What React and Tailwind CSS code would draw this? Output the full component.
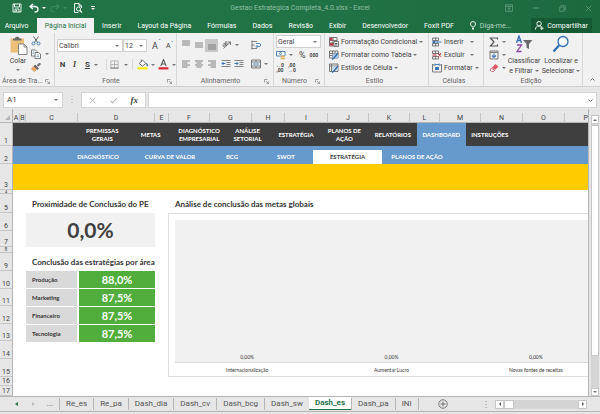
import clsx from 'clsx'

const ribbonTabs = ['Inserir', 'Layout da Página', 'Fórmulas', 'Dados', 'Revisão', 'Exibir', 'Desenvolvedor', 'Foxit PDF']

const columns = ['A', 'B', 'C', 'D', 'E', 'F', 'G', 'H', 'I', 'J', 'K', 'L', 'M', 'N', 'O', 'P']

const rows = [
  { n: 1, h: 'h-[23px]' },
  { n: 2, h: 'h-[18px]' },
  { n: 3, h: 'h-[26px]' },
  { n: 4, h: 'h-[4px] text-[4px] leading-[3px]' },
  { n: 5, h: 'h-[19px]' },
  { n: 6, h: 'h-[18px]' },
  { n: 7, h: 'h-[16px]' },
  { n: 8, h: 'h-[6px] text-[5px] leading-[5px]' },
  { n: 9, h: 'h-[18px]' },
  { n: 10, h: 'h-[18px]' },
  { n: 11, h: 'h-[17px]' },
  { n: 12, h: 'h-[18px]' },
  { n: 13, h: 'h-[17px]' },
  { n: 14, h: 'h-[18px]' },
  { n: 15, h: 'h-[18px]' },
  { n: 16, h: 'h-[9px]' },
  { n: 17, h: 'h-[10px]' },
]

const mainNav = [
  ['PREMISSAS', 'GERAIS'],
  ['METAS'],
  ['DIAGNÓSTICO', 'EMPRESARIAL'],
  ['ANÁLISE', 'SETORIAL'],
  ['ESTRATÉGIA'],
  ['PLANOS DE', 'AÇÃO'],
  ['RELATÓRIOS'],
  ['DASHBOARD'],
  ['INSTRUÇÕES'],
]

const subNav = ['DIAGNÓSTICO', 'CURVA DE VALOR', 'BCG', 'SWOT', 'ESTRATÉGIA', 'PLANOS DE AÇÃO']

const areas = [
  { name: 'Produção', value: '88,0%' },
  { name: 'Marketing', value: '87,5%' },
  { name: 'Financeiro', value: '87,5%' },
  { name: 'Tecnologia', value: '87,5%' },
]

const goals = [
  { name: 'Internacionalização', value: '0,00%' },
  { name: 'Aumentar Lucro', value: '0,00%' },
  { name: 'Novas fontes de receitas', value: '0,00%' },
]

const sheets = ['Re_es', 'Re_pa', 'Dash_dia', 'Dash_cv', 'Dash_bcg', 'Dash_sw', 'Dash_es', 'Dash_pa', 'INI']

function Svg({ size = 'size-[10px]', box = '0 0 20 20', label, children }) {
  return (
    <svg
      viewBox={box}
      className={clsx(size, 'shrink-0')}
      fill="none"
      stroke="#6b6b6b"
      strokeWidth="1.8"
      role={label ? 'img' : undefined}
      aria-label={label}
      aria-hidden={label ? undefined : true}
    >
      {children}
    </svg>
  )
}

function Caret({ className = 'border-t-[#777]' }) {
  return <span className={clsx('w-0 h-0 shrink-0 border-x-2 border-t-2 border-x-transparent', className)} />
}

function IconButton({ label, className, children }) {
  return (
    <button type="button" aria-label={label} className={clsx('flex items-center justify-center shrink-0', className)}>
      {children}
    </button>
  )
}

function Lines({ widths, from = 3 }) {
  return widths.map(([x1, x2], i) => <path key={i} d={`M${x1} ${from + i * 4}H${x2}`} stroke="#777" />)
}

function Group({ label, launcher, width, children }) {
  return (
    <section aria-label={label} className={clsx('flex flex-col shrink-0 border-r border-[#d8d8d8]', width)}>
      <div className="h-[43px]">{children}</div>
      <div className="flex items-center h-[10px] pr-1 text-[#666]">
        <span className="flex-1 text-center whitespace-nowrap">{label}</span>
        {launcher && (
          <IconButton label={`Opções de ${label}`}>
            <Svg size="size-[5px]" box="0 0 10 10">
              <path d="M1 7V1h6M4 4l5 5M9 5v4H5" strokeWidth="1.2" />
            </Svg>
          </IconButton>
        )}
      </div>
    </section>
  )
}

function Picker({ label, value, width }) {
  return (
    <div className={clsx('flex items-center h-[13px] bg-white border border-[#d0d0d0]', width)}>
      <select aria-label={label} className="flex-1 min-w-0 appearance-none pl-px text-[#444] bg-transparent">
        <option>{value}</option>
      </select>
      <Caret className="border-t-[#777] mr-[3px]" />
    </div>
  )
}

function MenuRow({ icon, text, wide }) {
  return (
    <button type="button" className="flex items-center h-[13px] gap-[2px] whitespace-nowrap">
      {icon}
      <span className={clsx(wide && 'w-[24px] text-left')}>{text}</span>
      <Caret />
    </button>
  )
}

function TitleBar() {
  return (
    <div className="grid grid-cols-[1fr_auto_1fr] items-center h-[18px] pb-[2px]">
      <div className="flex items-center pl-3">
        <IconButton label="Salvar" className="w-[10px]">
          <Svg>
            <path d="M2 2h16v16H2z" stroke="#fff" />
            <path d="M5 2v6h10V2M6 18v-6h8v6M9 14v3" stroke="#fff" />
          </Svg>
        </IconButton>
        <IconButton label="Desfazer" className="ml-[7px] gap-[3px]">
          <Svg>
            <path d="M8 2L2 7l6 5M2 7h9c5 0 7 3 7 6s-3 5-7 5" stroke="#fff" strokeWidth="2.6" />
          </Svg>
          <Caret className="border-t-white" />
        </IconButton>
        <IconButton label="Refazer" className="ml-1 gap-[3px]">
          <Svg>
            <path d="M12 2l6 5-6 5M18 7H9c-5 0-7 3-7 6s3 5 7 5" stroke="#3f8a5d" strokeWidth="2.2" />
          </Svg>
          <Caret className="border-t-[#3f8a5d]" />
        </IconButton>
        <IconButton label="Visualizar impressão" className="ml-[6px]">
          <Svg>
            <path d="M3 19V1h9l5 5v4M3 19h8M12 1v5h5" stroke="#fff" />
            <circle cx="11" cy="12" r="4" stroke="#fff" />
            <path d="M14 15l4 4" stroke="#fff" strokeWidth="2.4" />
          </Svg>
        </IconButton>
        <IconButton label="Personalizar" className="ml-2 flex-col gap-px">
          <span className="w-1 h-px bg-white" />
          <Caret className="border-t-white" />
        </IconButton>
      </div>
      <h1 className="text-[#8fc0a3] whitespace-nowrap">Gestao Estrategica Completa_4.0.xlsx - Excel</h1>
      <div className="flex justify-end gap-[19px] pr-2">
        <IconButton label="Opções da faixa">
          <Svg size="size-[8px]">
            <path d="M1 2h18v16H1zM1 6h18M10 16V9M7 12l3-3 3 3" stroke="#6fa786" />
          </Svg>
        </IconButton>
        <IconButton label="Minimizar">
          <Svg size="size-[8px]">
            <path d="M2 10h16" stroke="#6fa786" strokeWidth="2" />
          </Svg>
        </IconButton>
        <IconButton label="Restaurar">
          <Svg size="size-[7px]">
            <path d="M2 6h12v12H2zM6 6V2h12v12h-4" stroke="#6fa786" />
          </Svg>
        </IconButton>
        <IconButton label="Fechar">
          <Svg size="size-[7px]">
            <path d="M2 2l16 16M18 2L2 18" stroke="#6fa786" />
          </Svg>
        </IconButton>
      </div>
    </div>
  )
}

function TabStrip() {
  return (
    <nav className="flex h-[15px] text-white whitespace-nowrap">
      <button type="button" className="w-[37px] pl-1 pr-2">Arquivo</button>
      <button type="button" className="w-[57px] bg-[#f1f1f1] text-[#217346]">Página Inicial</button>
      {ribbonTabs.map(tab => (
        <button type="button" key={tab} className="px-2">{tab}</button>
      ))}
      <button type="button" className="flex items-center gap-1 pl-2 text-[#b5d6c2]">
        <Svg size="w-[6px] h-[9px]" box="0 0 12 18">
          <path d="M4 12c0-2-3-3-3-6a5 5 0 0110 0c0 3-3 4-3 6zM4 15h4M5 17h2" stroke="#fff" />
        </Svg>
        Diga-me...
      </button>
      <button type="button" className="flex items-center justify-center gap-[3px] w-[61px] ml-auto mr-2 bg-[#165a34]">
        <Svg size="size-[9px]">
          <circle cx="9" cy="6" r="5" stroke="#fff" strokeWidth="2" />
          <path d="M1 19c0-5 3-8 8-8 2 0 4 1 5 2M15 12v8M11 16h8" stroke="#fff" strokeWidth="2" />
        </Svg>
        Compartilhar
      </button>
    </nav>
  )
}

function ClipboardGroup() {
  return (
    <Group label="Área de Tra..." launcher width="w-[55px]">
      <div className="flex pl-2 pt-[3px]">
        <button type="button" className="flex flex-col items-center w-[20px]">
          <Svg size="size-[19px]" box="0 0 38 38">
            <path d="M3 5h27v28H3z" fill="#ecc07b" stroke="none" />
            <path d="M8 9V5h4c0-5 9-5 9 0h4v4z" fill="#6a6a6a" stroke="none" />
            <path d="M19 16h11l6 6v15H19z" fill="#fff" stroke="#777" />
            <path d="M30 16v6h6" stroke="#777" />
          </Svg>
          <span className="h-[12px] leading-[12px]">Colar</span>
          <Caret className="border-t-[#777] mt-[2px]" />
        </button>
        <div className="flex flex-col gap-[3px] pl-[3px]">
          <IconButton label="Recortar" className="w-[10px]">
            <Svg>
              <path d="M5 1l8 12M15 1L7 13" stroke="#666" strokeWidth="2" />
              <circle cx="5" cy="15" r="3" stroke="#3c76b8" />
              <circle cx="15" cy="15" r="3" stroke="#3c76b8" />
            </Svg>
          </IconButton>
          <IconButton label="Copiar" className="gap-1">
            <Svg>
              <path d="M1 2h8l3 3v9H1z" fill="#fff" />
              <path d="M8 7h7l4 3v9H8z" fill="#fff" />
              <path d="M3 6h4M3 9h3M11 12h5M11 15h5" stroke="#3c76b8" strokeWidth="1.2" />
            </Svg>
            <Caret />
          </IconButton>
          <IconButton label="Pincel de formatação" className="w-[10px]">
            <Svg>
              <path d="M12 7l5-5 2 2-5 5" fill="#666" />
              <path d="M8 6l7 7-3 2-6-6z" fill="#666" />
              <path d="M5 9l6 6-4 4-6-5z" fill="#eaa763" stroke="#e2975a" />
            </Svg>
          </IconButton>
        </div>
      </div>
    </Group>
  )
}

function FontGroup() {
  return (
    <Group label="Fonte" launcher width="w-[122px]">
      <div className="flex items-center pl-[2px] pt-[6px]">
        <Picker label="Fonte" value="Calibri" width="w-[66px]" />
        <Picker label="Tamanho da fonte" value="12" width="w-[24px]" />
        <button type="button" aria-label="Aumentar fonte" className="pl-[5px] text-[9px]">A<sup className="text-[#3c76b8]">ˆ</sup></button>
        <button type="button" aria-label="Diminuir fonte" className="pl-[5px]">A<sup className="text-[#3c76b8]">ˇ</sup></button>
      </div>
      <div className="flex items-center h-[13px] mt-[6px] pl-[2px]">
        <button type="button" className="w-[12px] text-[8px] font-bold">N</button>
        <button type="button" className="w-[13px] text-[8px] italic font-bold font-['Liberation_Serif',serif]">I</button>
        <button type="button" className="w-[14px] text-[8px] font-bold underline">S</button>
        <Caret />
        <span className="h-[11px] ml-[8px] mr-[3px] border-l border-[#d8d8d8]" />
        <IconButton label="Bordas" className="gap-[5px]">
          <Svg size="size-[9px]">
            <path d="M2 2h16v16H2zM10 2v16M2 10h16" stroke="#aaa" />
            <path d="M1 18h18" />
          </Svg>
          <Caret />
        </IconButton>
        <span className="h-[11px] mx-1 border-l border-[#d8d8d8]" />
        <IconButton label="Cor de preenchimento" className="gap-[3px]">
          <Svg size="size-[11px]">
            <path d="M4 8l6-6 6 6-6 5zM8 5V1" fill="#fff" />
            <path d="M17 8c2 2 2 4 1 5" stroke="#3c76b8" strokeWidth="2.4" />
            <path d="M1 15h18v4H1z" fill="#ffee00" stroke="none" />
          </Svg>
          <Caret />
        </IconButton>
        <IconButton label="Cor da fonte" className="gap-[3px] pl-[3px]">
          <Svg size="size-[11px]">
            <path d="M5 13l5-12 5 12M7 9h6" stroke="#555" strokeWidth="2" />
            <path d="M1 15h18v4H1z" fill="#d8242c" stroke="none" />
          </Svg>
          <Caret />
        </IconButton>
      </div>
    </Group>
  )
}

function AlignmentGroup() {
  const full = [[2, 18], [2, 18], [2, 18]]
  return (
    <Group label="Alinhamento" launcher width="w-[97px]">
      <div className="flex items-center h-[14px] mt-[5px] pl-1">
        <IconButton label="Alinhar em cima"><Svg><Lines widths={full} from={2} /></Svg></IconButton>
        <IconButton label="Alinhar no meio" className="ml-[3px]"><Svg><Lines widths={full} from={6} /></Svg></IconButton>
        <IconButton label="Alinhar embaixo" className="w-[13px] h-[13px] ml-px bg-[#c8c8c8]"><Svg><Lines widths={full} from={10} /></Svg></IconButton>
        <IconButton label="Orientação" className="ml-1 gap-[3px]">
          <Svg>
            <path d="M3 17L17 4M11 4h6v6" />
            <path d="M2 9c2-4 5-2 4 2-1 3-5 2-4-1M8 2l-1 8c4 1 5-3 2-4" stroke="#555" />
          </Svg>
          <Caret />
        </IconButton>
        <IconButton label="Quebrar texto" className="ml-auto mr-3">
          <Svg>
            <path d="M1 3h11M1 10h6M1 17h11M2 1v18" stroke="#777" />
            <path d="M10 7h7c3 0 3 6 0 6h-6M13 10l-3 3 3 3" stroke="#3c76b8" />
          </Svg>
        </IconButton>
      </div>
      <div className="flex items-center h-[14px] mt-[5px] pl-1">
        <IconButton label="Alinhar à esquerda"><Svg><Lines widths={[[2, 18], [2, 13], [2, 18], [2, 13]]} from={4} /></Svg></IconButton>
        <IconButton label="Centralizar" className="ml-[3px]"><Svg><Lines widths={[[2, 18], [5, 15], [2, 18], [5, 15]]} from={4} /></Svg></IconButton>
        <IconButton label="Alinhar à direita" className="ml-[3px]"><Svg><Lines widths={[[2, 18], [7, 18], [2, 18], [7, 18]]} from={4} /></Svg></IconButton>
        <IconButton label="Diminuir recuo" className="ml-1">
          <Svg>
            <path d="M1 3h18M11 7h8M11 11h8M1 15h18" stroke="#777" />
            <path d="M9 9H2M5 6L2 9l3 3" stroke="#3c76b8" strokeWidth="2" />
          </Svg>
        </IconButton>
        <IconButton label="Aumentar recuo" className="ml-[3px]">
          <Svg>
            <path d="M1 3h18M11 7h8M11 11h8M1 15h18" stroke="#777" />
            <path d="M1 9h7M5 6l3 3-3 3" stroke="#3c76b8" strokeWidth="2" />
          </Svg>
        </IconButton>
        <IconButton label="Mesclar e centralizar" className="ml-auto mr-[5px] gap-[3px]">
          <Svg>
            <path d="M1 2h18v16H1zM1 6h18M1 14h18M10 2v4M10 14v4" />
            <path d="M4 10h12" stroke="#3c76b8" />
          </Svg>
          <Caret />
        </IconButton>
      </div>
    </Group>
  )
}

function NumberGroup() {
  return (
    <Group label="Número" launcher width="w-[51px]">
      <div className="flex flex-col pl-[2px] pt-[2px]">
        <Picker label="Formato de número" value="Geral" width="w-[45px]" />
        <div className="flex items-center h-[13px]">
          <IconButton label="Moeda" className="gap-[3px]">
            <Svg>
              <path d="M1 3h17v9H1z" fill="#fff" stroke="#3c76b8" />
              <circle cx="9" cy="7" r="2" stroke="#3c76b8" />
              <path d="M9 13h9M9 17h9" stroke="#e8b560" strokeWidth="3" />
            </Svg>
            <Caret />
          </IconButton>
          <button type="button" aria-label="Porcentagem" className="ml-[6px] text-[9px]">%</button>
          <button type="button" aria-label="Separador de milhares" className="ml-1 text-[5px] font-bold">000</button>
        </div>
        <div className="flex items-center h-[14px] gap-1">
          <button type="button" aria-label="Aumentar casas decimais" className="text-[5px] leading-[5px] font-bold">
            <span className="block text-left"><span className="text-[#3c76b8]">←</span>0</span>
            <span className="block">,00</span>
          </button>
          <button type="button" aria-label="Diminuir casas decimais" className="text-[5px] leading-[5px] font-bold">
            <span className="block">,00</span>
            <span className="block"><span className="text-[#3c76b8]">→</span>0</span>
          </button>
        </div>
      </div>
    </Group>
  )
}

function StylesGroup() {
  return (
    <Group label="Estilo" width="w-[104px]">
      <div className="flex flex-col pl-1 pt-[2px]">
        <MenuRow
          text="Formatação Condicional"
          icon={
            <Svg>
              <path d="M1 1h15v17H1zM1 7h15M1 12h15M8 1v17" />
              <path d="M2 2h5v5H2zM2 12h7v5H2z" fill="#c8384a" stroke="none" />
              <path d="M10 9h9v10h-9z" fill="#fff" />
              <path d="M12 13h5M12 16h5" stroke="#444" />
            </Svg>
          }
        />
        <MenuRow
          text="Formatar como Tabela"
          icon={
            <Svg>
              <path d="M1 2h17v14H1zM1 7h17M1 11h17M7 2v14M12 2v14" />
              <path d="M7 7h11v9H7z" fill="#a9c9e8" stroke="none" />
              <path d="M18 6l-8 10-4 3" stroke="#2f6cb0" strokeWidth="2.6" />
            </Svg>
          }
        />
        <MenuRow
          text="Estilos de Célula"
          icon={
            <Svg>
              <path d="M1 2h17v15H1zM1 6h17M5 2v15" />
              <path d="M6 7h11v9H6z" fill="#c5d9ec" stroke="none" />
              <path d="M18 6l-8 10-4 3" stroke="#2f6cb0" strokeWidth="2.6" />
            </Svg>
          }
        />
      </div>
    </Group>
  )
}

function CellsGroup() {
  return (
    <Group label="Células" width="w-[55px]">
      <div className="flex flex-col pl-[3px] pt-[2px]">
        <MenuRow
          wide
          text="Inserir"
          icon={
            <Svg>
              <path d="M1 2h12v5H1zM7 2v5M1 13h12v5H1zM7 13v5" />
              <path d="M9 10h10M12 7l-3 3 3 3" stroke="#3c76b8" />
              <path d="M1 8h6v4H1z" fill="#3c76b8" stroke="none" />
            </Svg>
          }
        />
        <MenuRow
          wide
          text="Excluir"
          icon={
            <Svg>
              <path d="M1 2h12v5H1zM7 2v5M1 13h12v5H1zM7 13v5" />
              <path d="M12 7l6 6M18 7l-6 6" stroke="#c8384a" strokeWidth="2.2" />
              <path d="M1 8h8v4H1z" fill="#d98a92" stroke="none" />
            </Svg>
          }
        />
        <MenuRow
          text="Formatar"
          icon={
            <Svg>
              <path d="M1 4h4M15 4h4M1 18h18V2M1 2v16" />
              <path d="M6 1v5M14 1v5M6 3h8" stroke="#3c76b8" />
              <path d="M6 8h8v6H6z" fill="#3c76b8" stroke="none" />
            </Svg>
          }
        />
      </div>
    </Group>
  )
}

function EditingGroup() {
  return (
    <Group label="Edição" width="w-[99px]">
      <div className="flex pt-[2px] pl-1">
        <div className="flex flex-col w-[18px]">
          <IconButton label="AutoSoma" className="h-[13px] gap-[3px]">
            <Svg>
              <path d="M17 5V2H3l7 8-7 8h14v-3" stroke="#555" strokeWidth="2.4" />
            </Svg>
            <Caret />
          </IconButton>
          <IconButton label="Preencher" className="h-[13px] gap-[3px]">
            <Svg>
              <path d="M2 2h16v16H2zM2 5h16" />
              <path d="M10 7v8M6 11l4 4 4-4" stroke="#3c76b8" strokeWidth="2.2" />
            </Svg>
            <Caret />
          </IconButton>
          <IconButton label="Limpar" className="h-[13px] gap-[3px]">
            <Svg>
              <path d="M6 9l7-7 6 5-7 7z" fill="#e0566a" stroke="none" />
              <path d="M5 10l6 5-2 2H5l-3-3z" fill="#fff" stroke="#e0566a" />
            </Svg>
            <Caret />
          </IconButton>
        </div>
        <button type="button" className="flex flex-col items-center w-[36px] leading-[10px]">
          <Svg size="w-[18px] h-[18px]" box="0 0 36 36">
            <path d="M3 16L8 2l5 14M5 11h6" stroke="#2f6cb0" strokeWidth="2.6" />
            <path d="M4 20h9L4 33h9" stroke="#8c44a8" strokeWidth="2.6" />
            <path d="M16 10h19l-7 8v10l-5-3v-7z" fill="#6b6b6b" stroke="none" />
          </Svg>
          <span className="pt-[3px]">Classificar</span>
          <span className="flex items-center gap-[2px] whitespace-nowrap">e Filtrar<Caret /></span>
        </button>
        <button type="button" className="flex flex-col items-center w-[38px] leading-[10px]">
          <Svg size="w-[18px] h-[18px]" box="0 0 36 36">
            <circle cx="22" cy="13" r="10" fill="#f7fbff" stroke="#2f6cb0" strokeWidth="2.6" />
            <path d="M14 21L3 33" stroke="#2f6cb0" strokeWidth="4.5" />
          </Svg>
          <span className="pt-[3px] whitespace-nowrap">Localizar e</span>
          <span className="flex items-center gap-[2px] whitespace-nowrap">Selecionar<Caret /></span>
        </button>
      </div>
    </Group>
  )
}

function FormulaBar() {
  return (
    <div className="flex items-center h-[22px] pt-[4px] px-[3px] text-[#444]">
      <div className="flex items-center w-[60px] h-[16px] pr-1 bg-white border border-[#d4d4d4]">
        <input aria-label="Caixa de nome" defaultValue="A1" className="flex-1 min-w-0 pl-[3px] text-[8px]" />
        <Caret />
      </div>
      <Svg size="w-[2px] h-[8px] mx-2" box="0 0 2 8">
        <path d="M1 0v8" stroke="#aaa" strokeWidth="1" strokeDasharray="1 2" />
      </Svg>
      <div className="flex items-center justify-around w-[65px] h-[16px] bg-white border border-[#d4d4d4]">
        <IconButton label="Cancelar">
          <Svg size="size-[7px]"><path d="M2 2l16 16M18 2L2 18" stroke="#b5b5b5" strokeWidth="2.6" /></Svg>
        </IconButton>
        <IconButton label="Inserir">
          <Svg size="size-[7px]"><path d="M1 11l6 6L19 3" stroke="#b5b5b5" strokeWidth="3" /></Svg>
        </IconButton>
        <button type="button" aria-label="Inserir função" className="font-['Liberation_Serif',serif] text-[9px] italic font-bold">fx</button>
      </div>
      <div className="flex flex-1 items-center h-[16px] ml-[2px] pr-[3px] bg-white border border-[#d4d4d4]">
        <input aria-label="Barra de fórmulas" className="flex-1 min-w-0" />
        <Svg size="size-[5px]" box="0 0 10 10"><path d="M1 3l4 4 4-4" strokeWidth="2" /></Svg>
      </div>
    </div>
  )
}

function Banner() {
  return (
    <div className="font-['Lato',sans-serif] font-bold text-[6px] text-white whitespace-nowrap">
      <nav className="grid grid-cols-[65fr_repeat(9,48.4fr)_74fr] h-[23px] bg-[#3f3f3f]">
        {mainNav.map((lines, i) => (
          <a
            key={lines[0]}
            href="#dashboard"
            className={clsx(
              'flex flex-col items-center justify-center leading-[8px]',
              i === 0 && 'col-start-2',
              lines[0] === 'DASHBOARD' && 'bg-[#6699cc]'
            )}
          >
            {lines.map(line => <span key={line}>{line}</span>)}
          </a>
        ))}
      </nav>
      <nav className="grid grid-cols-[48fr_74fr_70fr_54fr_54fr_69fr_70fr_136fr] h-[18px] pt-1 bg-[#6699cc]">
        {subNav.map((item, i) => (
          <a
            key={item}
            href="#estrategia"
            className={clsx(
              'flex items-center justify-center',
              i === 0 && 'col-start-2',
              item === 'ESTRATÉGIA' && 'bg-white text-[#404040]'
            )}
          >
            {item}
          </a>
        ))}
      </nav>
      <div className="h-[26px] bg-[#ffcc00]" />
    </div>
  )
}

function GoalRow({ field, className }) {
  return (
    <div className={clsx('grid grid-cols-[144fr_144fr_124fr] text-center whitespace-nowrap', className)}>
      {goals.map((goal, i) => (
        <span key={goal.name} className={clsx(i === goals.length - 1 && 'pl-5')}>{goal[field]}</span>
      ))}
    </div>
  )
}

function Chart() {
  return (
    <section className="flex-1 min-w-0">
      <h2 className="h-[19px] pl-[7px] pt-[5px]">Análise de conclusão das metas globais</h2>
      <div className="border border-r-0 border-[#dedede] pl-[6px] pt-[6px] font-normal text-[5px] leading-[10px] text-[#333]">
        <GoalRow field="value" className="h-[143px] items-end bg-[#f1f1f1] border-b border-[#d9d9d9]" />
        <GoalRow field="name" className="h-[13px] items-center" />
      </div>
    </section>
  )
}

function Dashboard() {
  return (
    <div className="flex gap-[13px] pl-[13px] pt-1 font-['Lato',sans-serif] font-bold text-[8px] text-[#333]">
      <section className="w-[129px] shrink-0">
        <h2 className="h-[19px] pl-[6px] pt-[5px] whitespace-nowrap">Proximidade de Conclusão do PE</h2>
        <p className="flex items-center justify-center h-[34px] bg-[#f1f1f1] text-[21px] text-[#404040]">0,0%</p>
        <h2 className="h-[24px] pl-[6px] pt-[10px] whitespace-nowrap">Conclusão das estratégias por área</h2>
        <table className="w-full border-separate border-spacing-0">
          <tbody>
            {areas.map(area => (
              <tr key={area.name}>
                <th scope="row" className="w-[51px] h-[17px] p-0 pl-[6px] text-left text-[6px] leading-[16px] bg-[#d9d9d9] border-b border-white">
                  {area.name}
                </th>
                <td className="p-0 text-center text-[11px] leading-[17px] text-white bg-[#52ae3c] border-l-2 border-b border-white">
                  {area.value}
                </td>
              </tr>
            ))}
          </tbody>
        </table>
      </section>
      <Chart />
    </div>
  )
}

function ColumnHeaders() {
  return (
    <div className="flex h-[14px]">
      <div className="flex items-end justify-end w-[13px] p-[2px] border-r border-b border-[#b5b5b5]">
        <Svg size="size-[5px]" box="0 0 6 6"><path d="M6 0v6H0z" fill="#b5b5b5" stroke="none" /></Svg>
      </div>
      <div className="flex-1 grid grid-cols-[7fr_6fr_52fr_77fr_14fr_41fr_42fr_33fr_43fr_41fr_41fr_30fr_41fr_42fr_42fr_23fr] pt-1 border-b border-[#b5b5b5] text-[7px] text-[#444]">
        {columns.map(c => (
          <div
            key={c}
            className={clsx(
              'flex items-center min-w-0 border-r border-[#c6c6c6]',
              c === 'P' ? 'justify-end border-r-0' : 'justify-center'
            )}
          >
            {c}
          </div>
        ))}
      </div>
    </div>
  )
}

function Sheet() {
  return (
    <main className="flex">
      <div className="flex-1 min-w-0">
        <ColumnHeaders />
        <div className="flex">
          <div className="w-[13px] border-r border-[#b5b5b5] text-[7px] leading-[8px] text-[#444]">
            {rows.map(row => (
              <div key={row.n} className={clsx('flex items-end justify-center border-b border-[#c6c6c6]', row.h)}>
                {row.n}
              </div>
            ))}
          </div>
          <div className="flex-1 min-w-0 bg-white">
            <Banner />
            <Dashboard />
          </div>
        </div>
      </div>
      <div className="flex flex-col w-[12px] pt-[6px] pl-[2px] border-l border-[#b5b5b5] bg-[#e6e6e6]">
        <IconButton label="Rolar para cima" className="w-[8px] h-[9px] bg-white border border-[#c6c6c6]">
          <span className="border-x-2 border-b-2 border-x-transparent border-b-[#666]" />
        </IconButton>
        <div className="flex-1 w-[8px] pt-px bg-[#d4d4d4]">
          <div className="h-[88%] bg-white border border-[#c6c6c6]" />
        </div>
        <IconButton label="Rolar para baixo" className="w-[8px] h-[8px] bg-white border border-[#c6c6c6]">
          <Caret />
        </IconButton>
      </div>
    </main>
  )
}

function SheetTabs() {
  return (
    <footer className="flex items-center h-[16px] border-t border-b border-[#b5b5b5] text-[8px] text-[#555]">
      <IconButton label="Planilha anterior" className="w-[18px] justify-end">
        <span className="border-y-2 border-r-[3px] border-y-transparent border-r-[#217346]" />
      </IconButton>
      <IconButton label="Próxima planilha" className="w-[17px] justify-end">
        <span className="border-y-2 border-l-[3px] border-y-transparent border-l-[#bbb]" />
      </IconButton>
      <button type="button" className="w-[24px] pl-[6px]">...</button>
      {sheets.map(sheet => (
        <button
          type="button"
          key={sheet}
          className={clsx(
            'px-[6px]',
            sheet === 'Dash_es'
              ? 'self-stretch mb-px bg-white font-bold text-[#217346] border-b border-[#217346]'
              : 'h-[12px] leading-[10px] border-l border-[#b5b5b5]'
          )}
        >
          {sheet}
        </button>
      ))}
      <IconButton label="Nova planilha" className="h-[12px] pl-[19px] border-l border-[#b5b5b5]">
        <Svg><circle cx="10" cy="10" r="8.5" /><path d="M10 5v10M5 10h10" /></Svg>
      </IconButton>
      <Svg size="w-[2px] h-[7px] ml-auto mr-[8px]" box="0 0 2 7">
        <path d="M1 0v7" stroke="#999" strokeWidth="1" strokeDasharray="1 2" />
      </Svg>
      <div className="flex w-[92px] h-[9px] mr-[13px] bg-[#d4d4d4]">
        <IconButton label="Rolar para a esquerda" className="w-[9px] bg-white border border-[#c6c6c6]">
          <span className="border-y-2 border-r-2 border-y-transparent border-r-[#555]" />
        </IconButton>
        <div className="w-[10px] bg-white border border-[#c6c6c6]" />
        <IconButton label="Rolar para a direita" className="w-[9px] ml-auto bg-white border border-[#c6c6c6]">
          <span className="border-y-2 border-l-2 border-y-transparent border-l-[#555]" />
        </IconButton>
      </div>
    </footer>
  )
}

export default function App() {
  return (
    <div className="min-h-screen bg-[#e6e6e6] font-['Roboto',sans-serif] text-[7px] leading-[10px] text-[#444]">
      <header className="bg-linear-to-r from-[#217346] from-50% to-[#1c693e]">
        <TitleBar />
        <TabStrip />
      </header>
      <div className="flex h-[54px] bg-[#f1f1f1] border-b border-[#d0d0d0]">
        <ClipboardGroup />
        <FontGroup />
        <AlignmentGroup />
        <NumberGroup />
        <StylesGroup />
        <CellsGroup />
        <EditingGroup />
        <IconButton label="Recolher a faixa de opções" className="self-end ml-auto mr-[5px] mb-1">
          <Svg size="size-[5px]" box="0 0 10 10"><path d="M1 7l4-4 4 4" strokeWidth="2" /></Svg>
        </IconButton>
      </div>
      <FormulaBar />
      <Sheet />
      <SheetTabs />
    </div>
  )
}
